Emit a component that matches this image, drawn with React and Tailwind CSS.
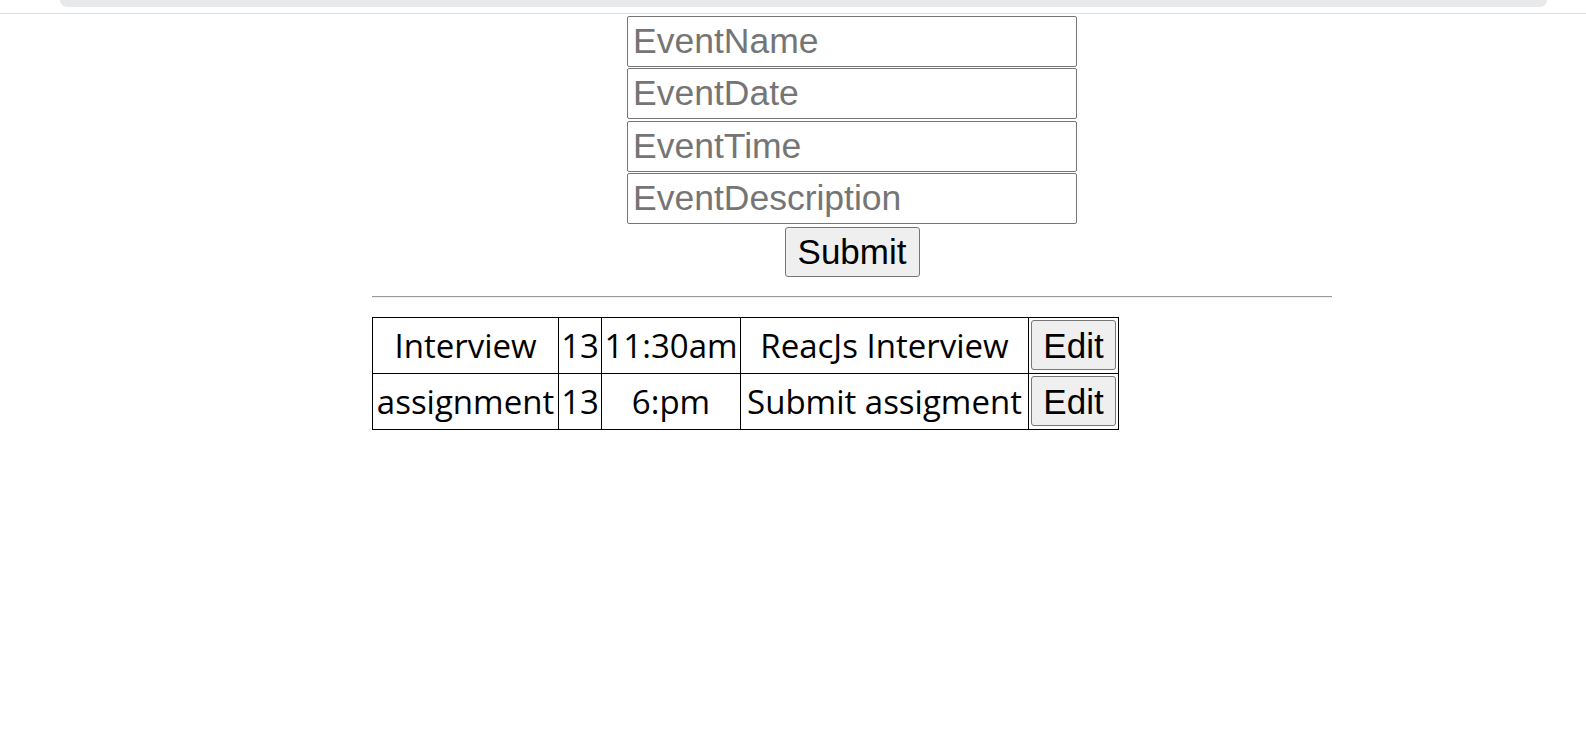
import React from "react";

const rows = [
  ["Interview", "13", "11:30am", "ReacJs Interview"],
  ["assignment", "13", "6:pm", "Submit assigment"],
];

export default function App() {
  const inputCls =
    "block w-[450px] h-[51px] border border-[#767676] rounded-[2px] px-[5px] text-[35.5px] text-black placeholder:text-[#757575] bg-white outline-none";
  return (
    <div className="w-[1586px] h-[730px] bg-white overflow-hidden" style={{ fontFamily: '"Liberation Sans", Arial, sans-serif' }}>
      <div className="ml-[60px] w-[1487px] h-[7px] bg-[#e8e9eb] rounded-b-[10px]" />
      <div className="mt-[6px] h-px w-full bg-[#dedede]" />
      <div className="pl-[372px] mt-[2px]">
        <div className="w-[960px]">
          <div className="flex flex-col items-center">
            <div className="flex flex-col gap-[1.4px]">
              <input className={inputCls} placeholder="EventName" />
              <input className={inputCls} placeholder="EventDate" />
              <input className={inputCls} placeholder="EventTime" />
              <input className={inputCls} placeholder="EventDescription" />
            </div>
            <button className="mt-[2.5px] w-[135px] h-[50px] bg-[#efefef] border border-[#767676] rounded-[3px] text-[35px] text-black leading-none">
              Submit
            </button>
          </div>
          <div className="mt-[19px] border-t border-t-[#9a9a9a] border-b border-b-[#eeeeee]" />
          <table
            className="mt-[19px] border-collapse border border-black text-black text-[33px]"
            style={{ fontFamily: '"Open Sans", "Noto Sans", sans-serif' }}
          >
            <tbody>
              {rows.map((r, i) => (
                <tr key={i} className="h-[56px]">
                  <td className="border border-black px-0 text-center w-[186px] leading-none">{r[0]}</td>
                  <td className="border border-black px-0 text-center w-[43px] leading-none">{r[1]}</td>
                  <td className="border border-black px-0 text-center w-[139px] leading-none">{r[2]}</td>
                  <td className="border border-black px-0 text-center w-[288px] leading-none">{r[3]}</td>
                  <td className="border border-black p-[2px] w-[90px]">
                    <button
                      className="w-[85px] h-[50px] bg-[#efefef] border border-[#767676] rounded-[3px] text-[35px] text-black leading-none"
                      style={{ fontFamily: '"Liberation Sans", Arial, sans-serif' }}
                    >
                      Edit
                    </button>
                  </td>
                </tr>
              ))}
            </tbody>
          </table>
        </div>
      </div>
    </div>
  );
}
